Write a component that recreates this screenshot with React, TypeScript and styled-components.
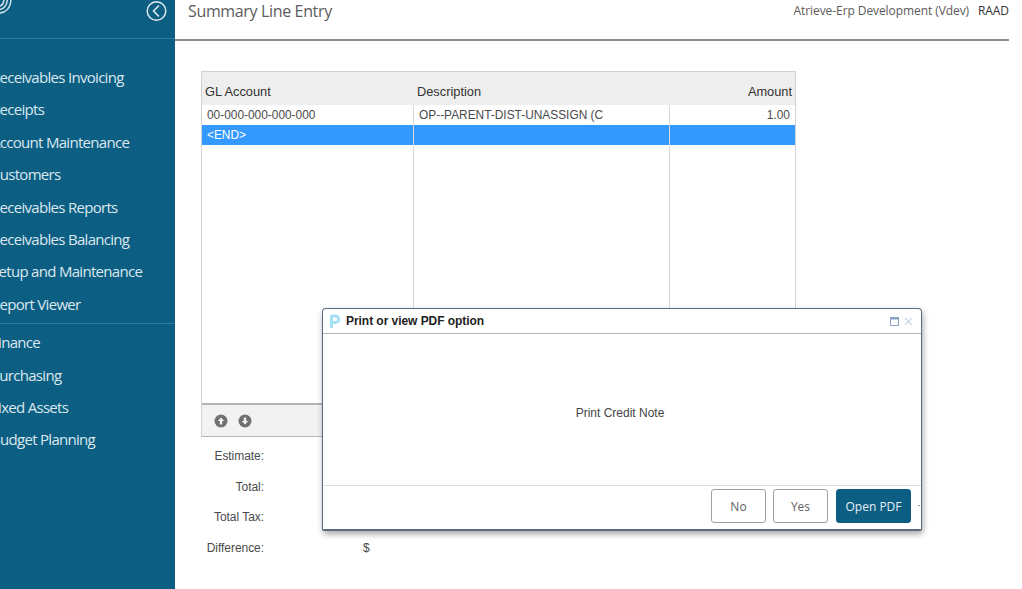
import React from 'react';
import styled, { createGlobalStyle } from 'styled-components';

const GlobalStyle = createGlobalStyle`
  html, body {
    margin: 0;
    padding: 0;
    background: #fff;
    overflow: hidden;
  }
`;

const Page = styled.div`
  position: relative;
  display: flex;
  width: 1022px;
  height: 589px;
  overflow: hidden;
  font-family: 'Liberation Sans', Arial, sans-serif;
  color: #444;
`;

const Sidebar = styled.aside`
  flex: none;
  width: 175px;
  background: #0d5e83;
  overflow: hidden;
`;

const Brand = styled.div`
  display: flex;
  align-items: flex-start;
  justify-content: space-between;
  height: 39px;
  padding-right: 8px;
  box-sizing: border-box;
  border-bottom: 1px solid #2f7a9b;
`;

const NavList = styled.nav`
  margin-left: -9px;
  padding-top: 22px;
  white-space: nowrap;
`;

const NavGroup = styled.div<{ divided?: boolean }>`
  ${({ divided }) => divided && 'border-top: 1px solid #2f7a9b; margin-top: 3px; padding-top: 2px;'}
`;

const NavItem = styled.div`
  height: 32.4px;
  line-height: 32.4px;
  font-family: 'Open Sans', sans-serif;
  font-size: 15px;
  letter-spacing: -0.7px;
  color: #dbe8ee;
`;

const Content = styled.div`
  flex: none;
  width: 834px;
  display: flex;
  flex-direction: column;
`;

const TopBar = styled.header`
  display: flex;
  justify-content: space-between;
  height: 41px;
  box-sizing: border-box;
  padding: 0 0 0 13px;
  border-bottom: 2px solid #8c8c8c;
  font-family: 'Open Sans', sans-serif;
  white-space: nowrap;
`;

const Title = styled.div`
  font-size: 16px;
  line-height: 22px;
  letter-spacing: -0.35px;
  color: #5c5c5c;
`;

const Environment = styled.div`
  display: flex;
  gap: 9px;
  font-size: 12px;
  line-height: 21px;
  letter-spacing: -0.08px;
  color: #5a5a5a;
`;

const User = styled.span`
  color: #333;
`;

const Main = styled.main`
  padding: 30px 0 0 26px;
`;

const Grid = styled.div`
  width: 595px;
  height: 366px;
  box-sizing: border-box;
  display: flex;
  flex-direction: column;
  border: 1px solid #d2d2d2;
  border-bottom-color: #b5b5b5;
  font-size: 11.9px;
`;

const columns = '212px 256px 1fr';

const HeaderRow = styled.div`
  display: grid;
  grid-template-columns: ${columns};
  height: 33px;
  background: #eeeeee;
  color: #333;
  font-size: 12.8px;
  line-height: 40px;
`;

const HeaderCell = styled.div<{ right?: boolean }>`
  padding: 0 3px;
  text-align: ${({ right }) => (right ? 'right' : 'left')};
`;

const Rows = styled.div`
  flex: 1;
  display: flex;
  flex-direction: column;
`;

const Row = styled.div<{ selected?: boolean; filler?: boolean }>`
  display: grid;
  grid-template-columns: ${columns};
  height: 20px;
  line-height: 20px;
  flex: ${({ filler }) => (filler ? 1 : 'none')};
  background: ${({ selected }) => (selected ? '#3399ff' : '#fff')};
  color: ${({ selected }) => (selected ? '#fff' : '#4a4a4a')};
`;

const Cell = styled.div<{ right?: boolean }>`
  padding: 0 5px;
  border-right: 1px solid #d8d8d8;
  text-align: ${({ right }) => (right ? 'right' : 'left')};
  white-space: nowrap;
  overflow: hidden;

  &:last-child {
    border-right: 0;
  }
`;

const Pager = styled.div`
  display: flex;
  align-items: center;
  gap: 10px;
  height: 33px;
  box-sizing: border-box;
  padding: 1px 0 0 12px;
  background: #f2f2f2;
  border-top: 2px solid #b3b3b3;
`;

const Totals = styled.div`
  display: grid;
  grid-template-columns: 63px auto;
  column-gap: 99px;
  justify-content: start;
  grid-auto-rows: 30.5px;
  padding-top: 4px;
  font-size: 12px;
  line-height: 30.5px;
  letter-spacing: -0.05px;
  color: #4a4a4a;
`;

const TotalLabel = styled.div`
  text-align: right;
  white-space: nowrap;
`;

const Dialog = styled.section`
  position: absolute;
  left: 322px;
  top: 308px;
  width: 600px;
  height: 223px;
  box-sizing: border-box;
  display: flex;
  flex-direction: column;
  background: #fff;
  border: 1px solid #5b6c80;
  border-bottom-width: 2px;
  border-radius: 4px 4px 2px 2px;
  box-shadow: 1px 3px 6px rgba(0, 0, 0, 0.35);
`;

const DialogTitle = styled.div`
  display: flex;
  align-items: center;
  height: 24px;
  padding: 0 8px 0 6px;
  border-bottom: 1px solid #b5b5b5;
  font-size: 12px;
  font-weight: 700;
  letter-spacing: -0.05px;
  color: #222;
`;

const DialogName = styled.span`
  margin-left: 5px;
  flex: 1;
`;

const WindowButtons = styled.div`
  display: flex;
  align-items: center;
  gap: 5px;
`;

const DialogBody = styled.div`
  flex: 1;
  display: flex;
  align-items: center;
  justify-content: center;
  padding: 6px 4px 0 0;
  font-size: 12px;
  color: #444;
`;

const DialogFooter = styled.div`
  display: flex;
  align-items: flex-start;
  height: 44px;
  box-sizing: border-box;
  padding: 3px 0 0 388px;
  border-top: 1px solid #dddddd;
`;

const Button = styled.button<{ primary?: boolean }>`
  height: 34px;
  width: ${({ primary }) => (primary ? '75px' : '55px')};
  margin-right: ${({ primary }) => (primary ? '0' : '7px')};
  margin-left: ${({ primary }) => (primary ? '1px' : '0')};
  padding: 0;
  border: ${({ primary }) => (primary ? '1px solid #0d5e83' : '1.5px solid #a0a0a0')};
  border-radius: 3px;
  background: ${({ primary }) => (primary ? '#0d5e83' : '#fff')};
  color: ${({ primary }) => (primary ? '#e6f0f4' : '#5f5f5f')};
  font-family: 'Open Sans', sans-serif;
  font-size: 12px;
`;

const Dot = styled.span`
  margin: 16px 0 0 7px;
  width: 2px;
  height: 1px;
  background: #999;
`;

const Logo = () => (
  <svg width="14" height="16" viewBox="0 0 14 16" fill="none" stroke="#d5e4eb" strokeWidth="1.4">
    <path d="M-1 13 C5 13 11 9 11 -2" />
    <path d="M-1 9.5 C3 9.5 7.5 6 7.5 -2" />
    <path d="M-1 6 C2 6 4 3 4 -2" />
  </svg>
);

const CollapseIcon = () => (
  <svg width="21" height="22" viewBox="0 0 21 22" fill="none" stroke="#e4eef2">
    <circle cx="10.5" cy="11" r="9.3" strokeWidth="1.4" />
    <path d="M13 5.5 L7.5 11 L13 16.5" strokeWidth="1.6" />
  </svg>
);

const PagerIcon = ({ down }: { down?: boolean }) => (
  <svg width="14" height="14" viewBox="0 0 14 14">
    <circle cx="7" cy="7" r="6.5" fill="#707070" />
    <path
      d={down ? 'M7 10.5 L3.8 7 H5.8 V3.5 H8.2 V7 H10.2 Z' : 'M7 3.5 L10.2 7 H8.2 V10.5 H5.8 V7 H3.8 Z'}
      fill="#f2f2f2"
    />
  </svg>
);

const DialogLogo = () => (
  <svg width="12" height="15" viewBox="0 0 12 15" fill="none" stroke="#a6e0f7" strokeWidth="3">
    <path d="M2.5 1 V14" />
    <path d="M2.5 2 H6.5 A3.2 3.2 0 0 1 6.5 8.5 H4" />
  </svg>
);

const MaximizeIcon = () => (
  <svg width="9" height="9" viewBox="0 0 9 9" fill="none" stroke="#8aa3c4">
    <rect x="0.5" y="0.5" width="8" height="8" />
    <path d="M0 1.5 H9" strokeWidth="2" />
  </svg>
);

const CloseIcon = () => (
  <svg width="9" height="9" viewBox="0 0 9 9" fill="none" stroke="#cfdbe8" strokeWidth="1.5">
    <path d="M1 1 L8 8 M8 1 L1 8" />
  </svg>
);

const primaryNav = [
  'Receivables Invoicing',
  'Receipts',
  'Account Maintenance',
  'Customers',
  'Receivables Reports',
  'Receivables Balancing',
  'Setup and Maintenance',
  'Report Viewer'
];

const secondaryNav = ['Finance', 'Purchasing', 'Fixed Assets', 'Budget Planning'];

const totals = ['Estimate:', 'Total:', 'Total Tax:', 'Difference:'];

export default function App() {
  return (
    <Page>
      <GlobalStyle />
      <Sidebar>
        <Brand>
          <Logo />
          <CollapseIcon />
        </Brand>
        <NavList>
          <NavGroup>
            {primaryNav.map(item => (
              <NavItem key={item}>{item}</NavItem>
            ))}
          </NavGroup>
          <NavGroup divided>
            {secondaryNav.map(item => (
              <NavItem key={item}>{item}</NavItem>
            ))}
          </NavGroup>
        </NavList>
      </Sidebar>
      <Content>
        <TopBar>
          <Title>Summary Line Entry</Title>
          <Environment>
            <span>Atrieve-Erp Development (Vdev)</span>
            <User>RAAD</User>
          </Environment>
        </TopBar>
        <Main>
          <Grid>
            <HeaderRow>
              <HeaderCell>GL Account</HeaderCell>
              <HeaderCell>Description</HeaderCell>
              <HeaderCell right>Amount</HeaderCell>
            </HeaderRow>
            <Rows>
              <Row>
                <Cell>00-000-000-000-000</Cell>
                <Cell>OP--PARENT-DIST-UNASSIGN (C</Cell>
                <Cell right>1.00</Cell>
              </Row>
              <Row selected>
                <Cell>&lt;END&gt;</Cell>
                <Cell />
                <Cell />
              </Row>
              <Row filler>
                <Cell />
                <Cell />
                <Cell />
              </Row>
            </Rows>
            <Pager>
              <PagerIcon />
              <PagerIcon down />
            </Pager>
          </Grid>
          <Totals>
            {totals.map(label => (
              <React.Fragment key={label}>
                <TotalLabel>{label}</TotalLabel>
                <span>{label === 'Difference:' ? '$' : ''}</span>
              </React.Fragment>
            ))}
          </Totals>
        </Main>
      </Content>
      <Dialog>
        <DialogTitle>
          <DialogLogo />
          <DialogName>Print or view PDF option</DialogName>
          <WindowButtons>
            <MaximizeIcon />
            <CloseIcon />
          </WindowButtons>
        </DialogTitle>
        <DialogBody>Print Credit Note</DialogBody>
        <DialogFooter>
          <Button>No</Button>
          <Button>Yes</Button>
          <Button primary>Open PDF</Button>
          <Dot />
        </DialogFooter>
      </Dialog>
    </Page>
  );
}
